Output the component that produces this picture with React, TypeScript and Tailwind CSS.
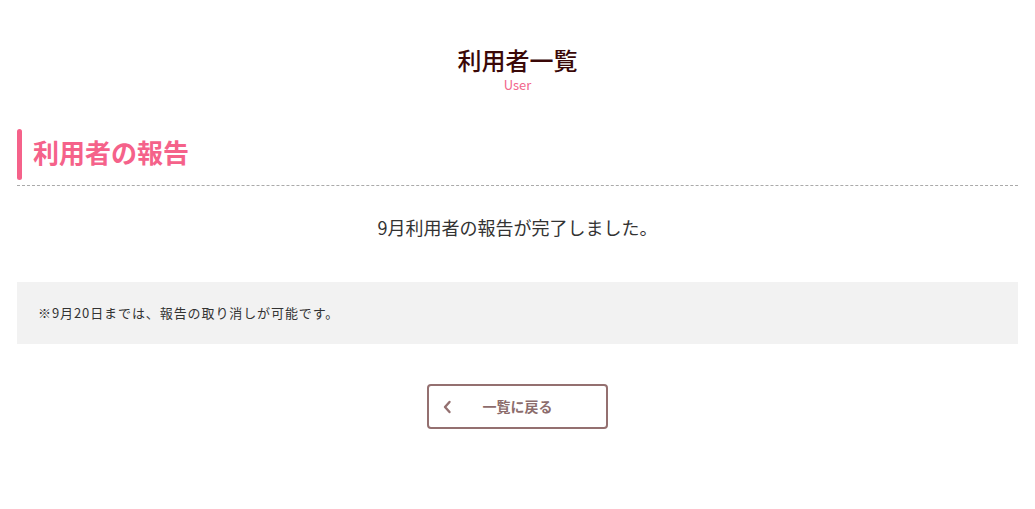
import React from "react";

export default function App() {
  const font = { fontFamily: '"Noto Sans CJK JP", "Noto Sans", sans-serif' };
  return (
    <div className="w-full min-h-[509px] bg-white" style={font}>
      <div className="flex flex-col items-center pt-[43px]">
        <h1 className="text-[24px] leading-[34px] font-medium text-[#3a0808]">利用者一覧</h1>
        <p className="text-[13px] leading-[16px] text-[#f2668b]">User</p>
      </div>
      <div className="px-[17px] mt-[36px]">
        <div className="flex items-center h-[51px]">
          <div className="w-[5px] h-[51px] rounded-full bg-[#f5628a]"></div>
          <h2 className="ml-[11px] -mt-[5px] text-[26px] font-bold text-[#f5628a] leading-none">利用者の報告</h2>
        </div>
        <div className="mt-[5px] border-t border-dashed border-[#aaaaaa]"></div>
        <p className="mt-[28px] text-center text-[18px] leading-[26px] text-[#333333]">
          9月利用者の報告が完了しました。
        </p>
        <div className="mt-[42px] h-[62px] bg-[#f2f2f2] flex items-center px-[21px]">
          <p className="text-[13px] tracking-[0.07em] text-[#333333]">※9月20日までは、報告の取り消しが可能です。</p>
        </div>
        <div className="flex justify-center mt-[40px]">
          <button className="relative w-[181px] h-[45px] border-2 border-[#947070] rounded-[4px] flex items-center justify-center bg-white">
            <svg className="absolute left-[13px] top-1/2 -translate-y-1/2" width="10" height="14" viewBox="0 0 10 14">
              <path d="M7.5 2 L3 7 L7.5 12" fill="none" stroke="#947070" strokeWidth="2.4" strokeLinecap="round" strokeLinejoin="round" />
            </svg>
            <span className="text-[14px] font-bold text-[#8c6c6c]">一覧に戻る</span>
          </button>
        </div>
      </div>
    </div>
  );
}
